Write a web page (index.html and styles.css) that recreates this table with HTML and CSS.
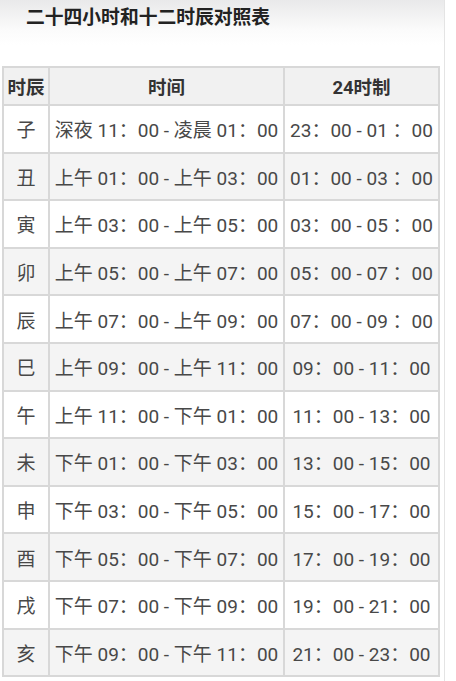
FILE: index.html
```html
<!DOCTYPE html>
<html lang="zh">
<head>
<meta charset="utf-8">
<link rel="stylesheet" href="styles.css">
</head>
<body>
<div class="page">
  <h1 class="title">二十四小时和十二时辰对照表</h1>
  <table class="chart">
    <colgroup><col class="c1"><col class="c2"><col class="c3"></colgroup>
    <thead>
      <tr><th>时辰</th><th>时间</th><th>24时制</th></tr>
    </thead>
    <tbody>
      <tr><td>子</td><td>深夜 11：00 - 凌晨 01：00</td><td>23：00 - 01 ：00</td></tr>
      <tr><td>丑</td><td>上午 01：00 - 上午 03：00</td><td>01：00 - 03 ：00</td></tr>
      <tr><td>寅</td><td>上午 03：00 - 上午 05：00</td><td>03：00 - 05 ：00</td></tr>
      <tr><td>卯</td><td>上午 05：00 - 上午 07：00</td><td>05：00 - 07 ：00</td></tr>
      <tr><td>辰</td><td>上午 07：00 - 上午 09：00</td><td>07：00 - 09 ：00</td></tr>
      <tr><td>巳</td><td>上午 09：00 - 上午 11：00</td><td>09：00 - 11：00</td></tr>
      <tr><td>午</td><td>上午 11：00 - 下午 01：00</td><td>11：00 - 13：00</td></tr>
      <tr><td>未</td><td>下午 01：00 - 下午 03：00</td><td>13：00 - 15：00</td></tr>
      <tr><td>申</td><td>下午 03：00 - 下午 05：00</td><td>15：00 - 17：00</td></tr>
      <tr><td>酉</td><td>下午 05：00 - 下午 07：00</td><td>17：00 - 19：00</td></tr>
      <tr><td>戌</td><td>下午 07：00 - 下午 09：00</td><td>19：00 - 21：00</td></tr>
      <tr><td>亥</td><td>下午 09：00 - 下午 11：00</td><td>21：00 - 23：00</td></tr>
    </tbody>
  </table>
</div>
</body>
</html>
```

FILE: styles.css
```css
html, body {
  margin: 0;
  padding: 0;
  background: #fff;
}
body {
  font-family: Roboto, "Noto Sans CJK SC", sans-serif;
  color: #484848;
}
.page {
  width: 445px;
  min-height: 681px;
  border-right: 1px solid #e4e4e4;
  background: linear-gradient(to bottom, #e9e9ea 0px, #fbfbfb 30px, #ffffff 45px);
  padding-top: 1px;
  box-sizing: border-box;
}
.title {
  margin: 0;
  padding: 4px 0 0 26px;
  height: 34px;
  box-sizing: border-box;
  font-size: 18.8px;
  line-height: 26px;
  font-weight: bold;
  color: #222;
}
.chart {
  margin: 31px 0 0 2px;
  border-collapse: collapse;
  table-layout: fixed;
  width: 436px;
  font-size: 19px;
}
.c1 { width: 46px; }
.c2 { width: 235px; }
.c3 { width: 155px; }
.chart th,
.chart td {
  border: 2px solid #d8d8d8;
  text-align: center;
  white-space: nowrap;
  padding: 0;
  overflow: hidden;
}
.chart th {
  height: 36px;
  background: #f1f1f1;
  font-weight: bold;
  color: #333;
  font-size: 18.5px;
}
.chart td {
  height: 45.6px;
  background: #fff;
}
.chart tbody tr:nth-child(even) td {
  background: #f4f4f4;
}
```
